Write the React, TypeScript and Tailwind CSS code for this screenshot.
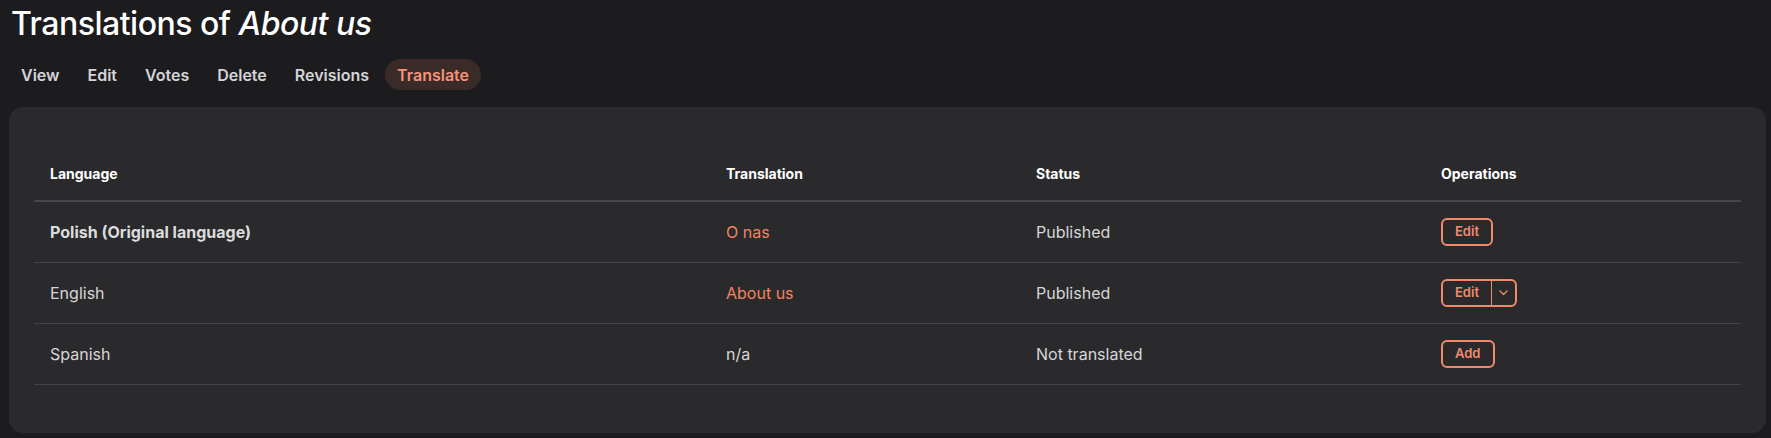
import React from "react";

type Row = {
  language: string;
  original?: boolean;
  translation: string;
  linked: boolean;
  status: string;
  op: "edit" | "split" | "add";
};

const rows: Row[] = [
  { language: "Polish (Original language)", original: true, translation: "O nas", linked: true, status: "Published", op: "edit" },
  { language: "English", translation: "About us", linked: true, status: "Published", op: "split" },
  { language: "Spanish", translation: "n/a", linked: false, status: "Not translated", op: "add" },
];

const tabs = ["View", "Edit", "Votes", "Delete", "Revisions", "Translate"];

function OpButton({ kind }: { kind: Row["op"] }) {
  if (kind === "split") {
    return (
      <div className="inline-flex h-[28px] items-stretch rounded-[6px] border-2 border-[#f2896b] text-[13px] font-semibold text-[#f2896b]">
        <span className="flex items-center px-[12px]">Edit</span>
        <span className="w-px bg-[#f2896b]" />
        <span className="flex w-[23px] items-center justify-center">
          <svg width="9" height="6" viewBox="0 0 9 6" fill="none">
            <path d="M1 1l3.5 3.5L8 1" stroke="#f2896b" strokeWidth="1.3" strokeLinecap="round" strokeLinejoin="round" />
          </svg>
        </span>
      </div>
    );
  }
  return (
    <button
      type="button"
      className="inline-flex h-[28px] items-center rounded-[6px] border-2 border-[#f2896b] px-[12px] text-[13px] font-semibold text-[#f2896b]"
    >
      {kind === "add" ? "Add" : "Edit"}
    </button>
  );
}

export default function App() {
  return (
    <div
      className="min-h-screen w-full bg-[#1c1c1e] pl-[9px] pr-[5px] text-[#d6d6d6]"
      style={{ fontFamily: 'Inter, "Noto Sans", "Liberation Sans", sans-serif' }}
    >
      {/* title */}
      <h1 className="pl-[2px] pt-[5px] text-[32px] leading-[38px] font-medium tracking-[-0.5px] text-white">
        Translations of <em className="italic">About us</em>
      </h1>

      {/* tabs */}
      <nav className="mt-[16px] flex items-center gap-[4px]">
        {tabs.map((t) => (
          <a
            key={t}
            className={
              t === "Translate"
                ? "flex h-[31px] items-center rounded-full bg-[#3a2b28] px-[12px] text-[16px] font-semibold text-[#f5937a]"
                : "flex h-[31px] items-center rounded-full px-[12px] text-[16px] font-semibold text-[#d4d4d8]"
            }
          >
            {t}
          </a>
        ))}
      </nav>

      {/* card */}
      <div className="mt-[17px] rounded-[14px] bg-[#2a2a2c] px-[25px] pb-[48px] pt-[41px]">
        <table className="w-full table-fixed border-collapse text-left">
          <colgroup>
            <col className="w-[676px]" />
            <col className="w-[310px]" />
            <col className="w-[405px]" />
            <col />
          </colgroup>
          <thead>
            <tr className="border-b-2 border-[#47474a]">
              {["Language", "Translation", "Status", "Operations"].map((h) => (
                <th key={h} className="px-4 py-4 text-[14px] leading-5 font-bold text-white">
                  {h}
                </th>
              ))}
            </tr>
          </thead>
          <tbody>
            {rows.map((r) => (
              <tr key={r.language} className="h-[61px] border-b border-[#424245]">
                <td className={"px-4 text-[16px] leading-6 " + (r.original ? "font-bold text-[#dcdcdc]" : "text-[#d6d6d6]")}>
                  {r.language}
                </td>
                <td className={"px-4 text-[16px] leading-6 " + (r.linked ? "text-[#f2845f]" : "text-[#d6d6d6]")}>
                  {r.translation}
                </td>
                <td className="px-4 text-[16px] leading-6 text-[#d6d6d6]">{r.status}</td>
                <td className="px-4 align-middle">
                  <OpButton kind={r.op} />
                </td>
              </tr>
            ))}
          </tbody>
        </table>
      </div>
    </div>
  );
}
